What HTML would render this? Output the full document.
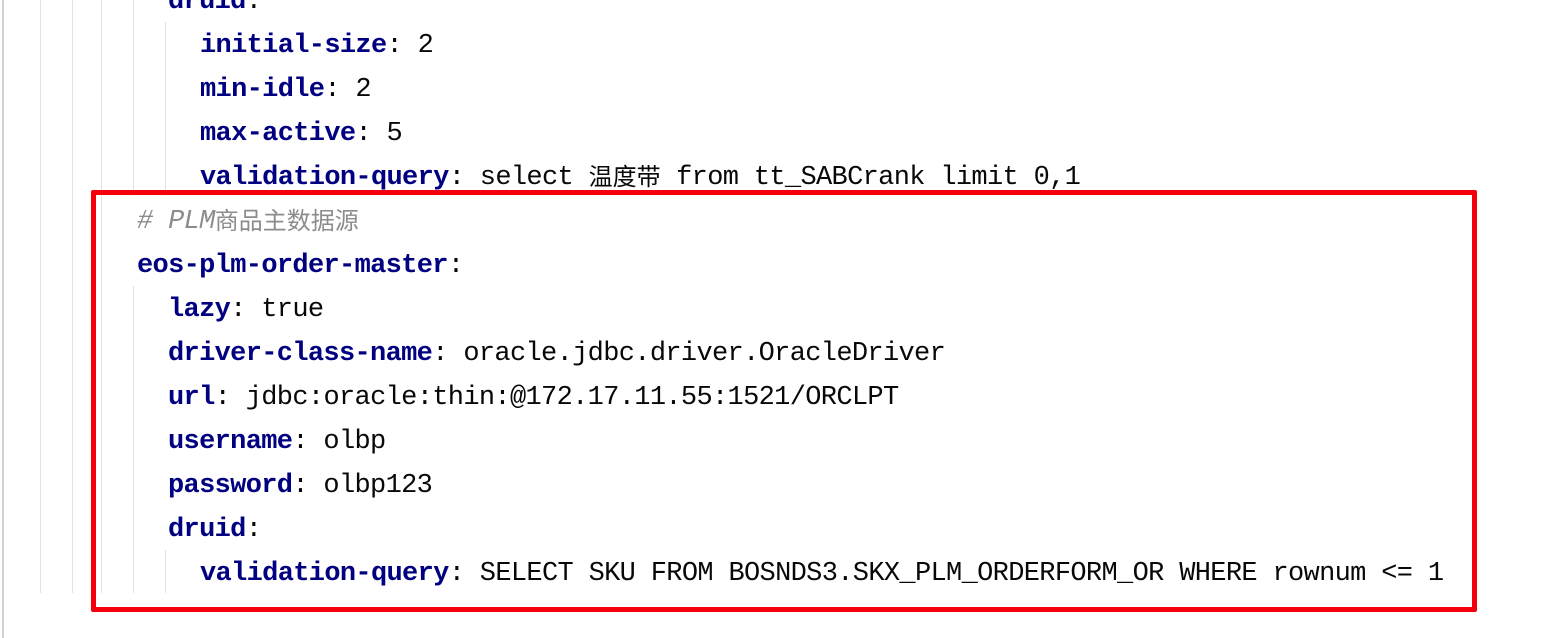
<!DOCTYPE html>
<html><head><meta charset="utf-8"><style>
html,body{margin:0;padding:0;background:#fff;width:1544px;height:638px;overflow:hidden;position:relative}
.l{position:absolute;height:44px;line-height:44px;white-space:pre;font-family:"Liberation Mono","Noto Sans CJK SC",monospace;font-size:27px;letter-spacing:-0.66px;color:#080808}
.k{color:#000080;font-weight:bold}
.c{color:#8c8c8c;font-style:italic}
.cj{font-family:"Noto Sans CJK SC",sans-serif;font-style:normal;font-size:24px;letter-spacing:0;line-height:1;display:inline-block;vertical-align:top;margin-top:7px}
.g{position:absolute;width:1px;background:#e2e2e2;top:0}
</style></head><body>
<div style="position:absolute;left:2px;top:0;width:2px;height:638px;background:#d0d0d0"></div>
<div class="g" style="left:40px;height:593px"></div>
<div class="g" style="left:72px;height:593px"></div>
<div class="g" style="left:101px;height:593px"></div>
<div class="g" style="left:133px;height:196px"></div>
<div class="g" style="left:165px;top:22px;height:174px"></div>
<div class="g" style="left:133px;top:286px;height:307px"></div>
<div class="g" style="left:165px;top:550px;height:43px"></div>

<div class="l" style="left:168px;top:-20px"><span class="k">druid</span>:</div>
<div class="l" style="left:200px;top:24px"><span class="k">initial-size</span>: 2</div>
<div class="l" style="left:200px;top:68px"><span class="k">min-idle</span>: 2</div>
<div class="l" style="left:200px;top:112px"><span class="k">max-active</span>: 5</div>
<div class="l" style="left:200px;top:156px"><span class="k">validation-query</span>: select <span class="cj">温度带</span> from tt_SABCrank limit 0,1</div>
<div class="l c" style="left:137px;top:200px"># PLM<span class="cj">商品主数据源</span></div>
<div class="l" style="left:137px;top:244px"><span class="k">eos-plm-order-master</span>:</div>
<div class="l" style="left:168px;top:288px"><span class="k">lazy</span>: true</div>
<div class="l" style="left:168px;top:332px"><span class="k">driver-class-name</span>: oracle.jdbc.driver.OracleDriver</div>
<div class="l" style="left:168px;top:376px"><span class="k">url</span>: jdbc:oracle:thin:@172.17.11.55:1521/ORCLPT</div>
<div class="l" style="left:168px;top:420px"><span class="k">username</span>: olbp</div>
<div class="l" style="left:168px;top:464px"><span class="k">password</span>: olbp123</div>
<div class="l" style="left:168px;top:508px"><span class="k">druid</span>:</div>
<div class="l" style="left:200px;top:552px"><span class="k">validation-query</span>: SELECT SKU FROM BOSNDS3.SKX_PLM_ORDERFORM_OR WHERE rownum &lt;= 1</div>

<div style="position:absolute;left:91px;top:190px;width:1376px;height:412px;border:5px solid #f4000c;border-radius:2px"></div>
</body></html>
